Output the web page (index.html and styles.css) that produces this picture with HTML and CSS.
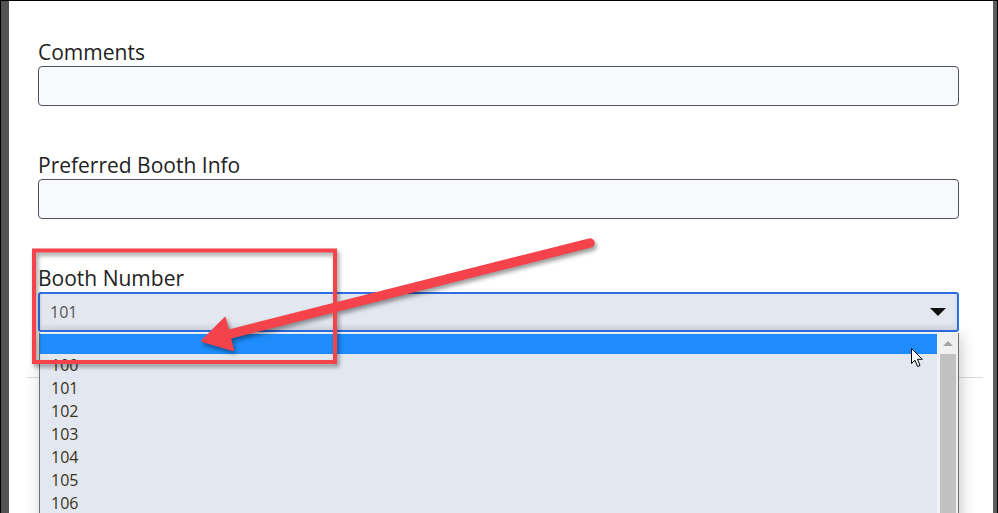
FILE: index.html
```html
<!DOCTYPE html>
<html>
<head>
  <meta name="viewport" content="width=device-width, initial-scale=1">
  <meta charset="UTF-8">
  <link rel="stylesheet" href="styles.css">
</head>
<body>
  <div class="frame">
    <div class="backdrop-strip left"></div>
    <div class="modal">
      <div class="modal-body">
        <div class="field">
          <label>Comments</label>
          <input type="text" class="text-input">
        </div>
        <div class="field">
          <label>Preferred Booth Info</label>
          <input type="text" class="text-input">
        </div>
        <div class="field booth">
          <label>Booth Number</label>
          <div class="select-wrap">
            <div class="select">
              <span class="select-value">101</span>
              <span class="caret"></span>
            </div>
            <div class="dropdown">
              <div class="options">
                <div class="option selected"></div>
                <div class="option">100</div>
                <div class="option">101</div>
                <div class="option">102</div>
                <div class="option">103</div>
                <div class="option">104</div>
                <div class="option">105</div>
                <div class="option">106</div>
              </div>
              <div class="scrollbar">
                <div class="scroll-up"></div>
                <div class="thumb"></div>
              </div>
            </div>
          </div>
        </div>
      </div>
      <div class="modal-footer"></div>
    </div>
    <div class="backdrop-strip right"></div>

    <!-- callout drawn on top of the screenshot -->
    <svg class="annotation" width="998" height="513" viewBox="0 0 998 513">
      <g class="callout">
        <rect x="34" y="250.5" width="301" height="111.5" fill="none" stroke="#f4434b" stroke-width="4"/>
        <line x1="590" y1="243" x2="226" y2="335" stroke="#f4434b" stroke-width="9.5" stroke-linecap="round"/>
        <polygon points="202,341 225,318 233,350" fill="#f4434b" stroke="#f4434b" stroke-width="2" stroke-linejoin="round"/>
      </g>
    </svg>

    <svg class="cursor" width="14" height="20" viewBox="0 0 14 20">
      <path d="M0.5 0.5 L0.5 15.5 L4 12.2 L6.6 18.5 L9 17.5 L6.5 11.3 L11.3 11.3 Z" fill="#fff" stroke="#000" stroke-width="1" stroke-linejoin="round"/>
    </svg>
  </div>
</body>
</html>
```

FILE: styles.css
```css
html, body {
  height: 100%;
  margin: 0;
  padding: 0;
}

body {
  overflow: hidden;
  background-color: #000;
  font-family: "Open Sans", "Noto Sans", sans-serif;
}

.frame {
  position: relative;
  display: flex;
  height: 513px;
  border: 1px solid #000;
  border-bottom: 0;
  box-sizing: border-box;
  overflow: hidden;
}

.backdrop-strip {
  flex: 0 0 8px;
  background-color: #525252;
}

.backdrop-strip.right {
  flex: 0 0 4px;
  background-color: #5c5c5c;
}

.modal {
  flex: 1;
  display: flex;
  flex-direction: column;
  background-color: #FFFFFF;
}

.modal-body {
  padding: 38px 34px 0 29px;
}

.field {
  display: flex;
  flex-direction: column;
  margin-bottom: 46px;
}

.field.booth {
  margin-bottom: 45px;
}

.field label {
  font-size: 21px;
  line-height: 27px;
  color: #222;
}

.text-input {
  height: 40px;
  margin: 0;
  border: 1px solid #50535e;
  border-radius: 4px;
  background-color: #f7f9fd;
  box-sizing: border-box;
}

.select-wrap {
  position: relative;
}

.select {
  display: flex;
  align-items: center;
  justify-content: space-between;
  height: 40px;
  padding: 0 11px 1px 10px;
  border: 2px solid #2d6ee6;
  border-radius: 3px;
  background-color: #e3e7ef;
  box-shadow: inset 0 -4px 5px rgba(0, 0, 0, 0.06);
  box-sizing: border-box;
}

.select-value {
  font-size: 16px;
  color: #555;
}

.caret {
  width: 0;
  height: 0;
  border-left: 8px solid transparent;
  border-right: 8px solid transparent;
  border-top: 8px solid #111;
  margin-top: 1px;
}

.dropdown {
  position: absolute;
  top: 41px;
  left: 1px;
  width: 920px;
  height: 200px;
  display: flex;
  background-color: #e3e7ef;
  border: 1px solid #6f6f6f;
  border-top: 0;
  box-sizing: border-box;
  box-shadow: 2px 4px 14px rgba(0, 0, 0, 0.22);
  z-index: 5;
}

.options {
  flex: 1;
}

.option {
  height: 23px;
  padding: 2px 0 2px 11px;
  line-height: 19px;
  font-size: 16px;
  color: #3a3320;
  box-sizing: border-box;
}

.option.selected {
  height: 20px;
  margin-top: 1px;
  background-color: #1e8cfb;
}

.scrollbar {
  flex: 0 0 20px;
  display: flex;
  flex-direction: column;
  align-items: center;
  background-color: #f0f0f0;
  border-left: 1px solid #f7f7f7;
}

.scroll-up {
  width: 0;
  height: 0;
  margin: 8px 0 8px;
  border-left: 5px solid transparent;
  border-right: 5px solid transparent;
  border-bottom: 5px solid #a3a3a3;
}

.thumb {
  width: 16px;
  flex: 1;
  background-color: #c1c1c1;
}

.modal-footer {
  margin: 0 10px 0 18px;
  border-top: 1px solid #d6dbe4;
}

.annotation {
  position: absolute;
  top: -1px;
  left: -1px;
  z-index: 10;
  pointer-events: none;
}

.callout {
  filter: drop-shadow(2px 3px 2px rgba(0, 0, 0, 0.4));
}

.cursor {
  position: absolute;
  top: 347px;
  left: 910px;
  z-index: 11;
}
```
